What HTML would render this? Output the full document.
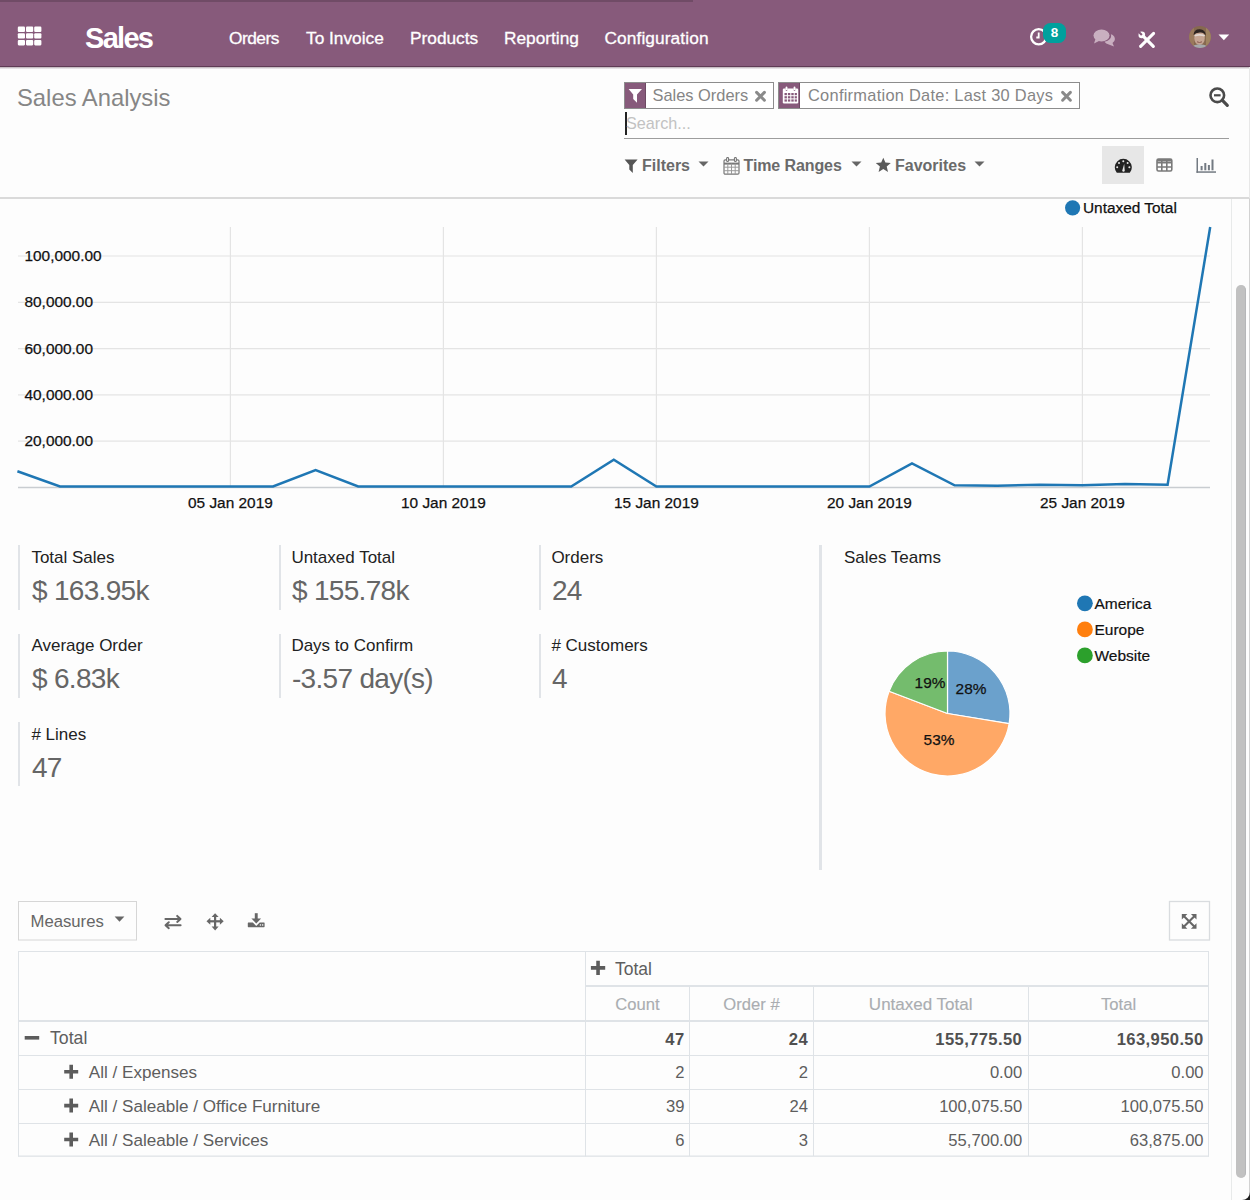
<!DOCTYPE html>
<html><head><meta charset="utf-8">
<style>
*{margin:0;padding:0;box-sizing:border-box}
html,body{width:1250px;height:1200px;overflow:hidden;background:#fdfdfd;font-family:"Liberation Sans",sans-serif}
.a{position:absolute;white-space:nowrap;line-height:1}
#nav{position:absolute;left:0;top:0;width:1250px;height:67px;background:#875a7b;border-bottom:1.2px solid #5f3b55}
#bar{position:absolute;left:0;top:0;width:693px;height:2px;background:#704b66}
.nv{color:#fff;font-size:17.3px;-webkit-text-stroke:0.3px #fff}
.cp-b{position:absolute;left:0;top:197px;width:1250px;height:2px;background:#dadada}
.fac{position:absolute;top:82px;height:27px;border:1px solid #8d8d8d;background:#fff}
.fic{position:absolute;left:0;top:0;height:25px;width:21px;background:#875a7b;border-right:1px solid #6d4a63}
.ft{color:#858585;font-size:16.4px}
.fl{color:#6a6a6a;font-size:16px;font-weight:bold}
.yl{color:#111;font-size:15.4px}
.kl{color:#222;font-size:17px;margin:0.6px 0 0 1.4px}
.kv{color:#666;font-size:28px;letter-spacing:-0.7px;margin:0.8px 0 0 2px}
.kb{position:absolute;width:2px;background:#e1e4e8}
td{font-size:15px}
.th{color:#aeb0b3;font-size:16.5px}
.td{color:#616161;font-size:16.5px}
.tb{color:#555;font-size:16.5px;font-weight:bold}
.tl{color:#616161;font-size:16.5px}
</style></head><body>
<div id="nav"><div id="bar"></div>
<!-- apps icon -->
<svg class="a" style="left:17px;top:26px" width="26" height="20" viewBox="0 0 26 20"><g fill="#fff"><rect x="0.8" y="0.6" width="7.2" height="5.4" rx="1.1"/><rect x="9" y="0.6" width="7.2" height="5.4" rx="1.1"/><rect x="17.2" y="0.6" width="7.2" height="5.4" rx="1.1"/><rect x="0.8" y="7.2" width="7.2" height="5.4" rx="1.1"/><rect x="9" y="7.2" width="7.2" height="5.4" rx="1.1"/><rect x="17.2" y="7.2" width="7.2" height="5.4" rx="1.1"/><rect x="0.8" y="14" width="7.2" height="5.4" rx="1.1"/><rect x="9" y="14" width="7.2" height="5.4" rx="1.1"/><rect x="17.2" y="14" width="7.2" height="5.4" rx="1.1"/></g></svg>
<div class="a" style="left:85px;top:24px;color:#fff;font-size:29px;font-weight:bold;letter-spacing:-1.7px">Sales</div>
<div class="a nv" style="left:229px;top:29.6px;letter-spacing:-0.5px">Orders</div>
<div class="a nv" style="left:306px;top:29.6px">To Invoice</div>
<div class="a nv" style="left:410px;top:29.6px">Products</div>
<div class="a nv" style="left:504px;top:29.6px">Reporting</div>
<div class="a nv" style="left:604.5px;top:29.6px;letter-spacing:0.1px">Configuration</div>
<!-- clock -->
<svg class="a" style="left:1028px;top:26px" width="22" height="22" viewBox="0 0 22 22">
<circle cx="10.7" cy="10.7" r="7.6" fill="none" stroke="#fff" stroke-width="2.3"/>
<path d="M10.7 6.5 V11.5 H8.3" fill="none" stroke="#fff" stroke-width="1.8"/>
</svg>
<div class="a" style="left:1043px;top:23.3px;width:23px;height:19.5px;border-radius:7.5px;background:#00a09d;color:#fff;font-size:13.5px;font-weight:bold;text-align:center;line-height:19.5px">8</div>
<!-- chat -->
<svg class="a" style="left:1092.5px;top:29px" width="22" height="19" viewBox="0 0 22 19">
<g fill="#c9afc0">
<ellipse cx="8.5" cy="6.5" rx="8" ry="6"/><path d="M2.5 10 L1 14.5 L7 11.5Z"/>
<path d="M11.5 12.8 A8 6 0 0 0 17.8 5.2 A5.8 5 0 0 1 19.5 14 L21 17.5 L15.8 15.4 A7 5 0 0 1 11.5 12.8Z"/>
</g></svg>
<!-- tools -->
<svg class="a" style="left:1137px;top:30px" width="20" height="19" viewBox="0 0 20 19">
<g stroke="#fff" stroke-linecap="round" fill="none">
<path d="M16.6 3.4 L3.6 16.4" stroke-width="3"/>
<path d="M6.2 6.2 L16.3 16.3" stroke-width="3.2"/>
</g>
<circle cx="4.8" cy="4.9" r="3.3" fill="#fff"/>
<rect x="-1.1" y="-4.5" width="2.2" height="4.6" transform="translate(4.8,4.9) rotate(-45)" fill="#875a7b"/>
</svg>
<!-- avatar -->
<svg class="a" style="left:1189px;top:25.8px" width="22" height="22" viewBox="0 0 22 22">
<defs><clipPath id="avc"><circle cx="11" cy="11" r="10.9"/></clipPath></defs>
<g clip-path="url(#avc)">
<rect width="22" height="22" fill="#86694f"/>
<rect x="0" y="0" width="5" height="22" fill="#9a7a5c"/><rect x="17" y="0" width="5" height="22" fill="#a08460"/>
<ellipse cx="10.5" cy="12" rx="5.3" ry="7" fill="#c5a592"/>
<path d="M4.5 9 Q5 3 10.8 3.2 Q16.5 3.4 16.8 9.5 Q15 6.2 10.8 6.6 Q6.5 6.8 4.5 9Z" fill="#2c2320"/>
<path d="M5.5 9.8 Q10.5 8 15.8 9.8" stroke="#e2d8d2" stroke-width="1.6" fill="none"/>
<path d="M8 15.8 Q10.5 17.2 13 15.8" stroke="#8a5a50" stroke-width="1" fill="none"/>
<path d="M3 22 Q4 18.2 10.8 18.6 Q17.5 18.2 18.5 22Z" fill="#a5a9ad"/>
</g></svg>
<svg class="a" style="left:1218px;top:34px" width="12" height="7" viewBox="0 0 12 7"><path d="M0.5 0.5 H11.2 L5.85 6.2Z" fill="#fff"/></svg>
</div>

<!-- control panel -->
<div class="a" style="left:0;top:67.2px;width:1250px;height:1.6px;background:linear-gradient(rgba(90,60,80,0.42),rgba(90,60,80,0.05))"></div>
<div class="a" style="left:1102px;top:146px;width:42px;height:38px;background:#e7e7e7"></div>

<div class="a" style="left:17px;top:86px;color:#868686;font-size:23.8px">Sales Analysis</div>

<div class="fac" style="left:624px;width:150px"><div class="fic"></div></div>
<div class="fac" style="left:778px;width:302px"><div class="fic"></div></div>
<div class="a ft" style="left:652.5px;top:87px">Sales Orders</div>
<svg class="a" style="left:628px;top:88px" width="15" height="16" viewBox="0 0 15 16"><path d="M0.6 1 H14 L9 6.5 V14.7 L5.2 11 V6.5 Z" fill="#fff"/></svg>
<svg class="a" style="left:754px;top:89.5px" width="13" height="13" viewBox="0 0 13 13"><path d="M2.6 2.4 L10.4 10.2 M10.4 2.4 L2.6 10.2" stroke="#8a8a8a" stroke-width="3" stroke-linecap="round"/></svg>
<svg class="a" style="left:782px;top:86px" width="17" height="18" viewBox="0 0 17 18"><g fill="#fff"><rect x="0.8" y="2.5" width="15.4" height="15" rx="1.2"/></g>
<g fill="#875a7b"><rect x="2.5" y="7" width="2.4" height="2.2"/><rect x="5.9" y="7" width="2.4" height="2.2"/><rect x="9.3" y="7" width="2.4" height="2.2"/><rect x="12.7" y="7" width="2.2" height="2.2"/>
<rect x="2.5" y="10.2" width="2.4" height="2.2"/><rect x="5.9" y="10.2" width="2.4" height="2.2"/><rect x="9.3" y="10.2" width="2.4" height="2.2"/><rect x="12.7" y="10.2" width="2.2" height="2.2"/>
<rect x="2.5" y="13.4" width="2.4" height="2.2"/><rect x="5.9" y="13.4" width="2.4" height="2.2"/><rect x="9.3" y="13.4" width="2.4" height="2.2"/><rect x="12.7" y="13.4" width="2.2" height="2.2"/>
<rect x="3.8" y="2.5" width="1.4" height="2.4"/><rect x="11.8" y="2.5" width="1.4" height="2.4"/></g>
<g fill="#fff"><rect x="3.6" y="0.6" width="1.8" height="3.6" rx="0.9"/><rect x="11.6" y="0.6" width="1.8" height="3.6" rx="0.9"/></g></svg>
<svg class="a" style="left:1059.5px;top:89.5px" width="13" height="13" viewBox="0 0 13 13"><path d="M2.6 2.4 L10.4 10.2 M10.4 2.4 L2.6 10.2" stroke="#8a8a8a" stroke-width="3" stroke-linecap="round"/></svg>
<svg class="a" style="left:1208px;top:86px" width="22" height="22" viewBox="0 0 22 22"><circle cx="9.3" cy="9.3" r="6.8" fill="none" stroke="#4a4a4a" stroke-width="2.6"/><path d="M14.2 14.2 L19.3 19.3" stroke="#4a4a4a" stroke-width="3.2" stroke-linecap="round"/><path d="M6 9.3 H12.6" stroke="#4a4a4a" stroke-width="2.2"/></svg>
<svg class="a" style="left:624px;top:158.5px" width="15" height="15" viewBox="0 0 15 15"><path d="M0.6 0.6 H13.6 L8.8 6 V14 L5.3 10.6 V6 Z" fill="#555"/></svg>
<svg class="a" style="left:697.5px;top:160.5px" width="11" height="6" viewBox="0 0 11 6"><path d="M0.5 0.5 H10.5 L5.5 5.6Z" fill="#666"/></svg>
<svg class="a" style="left:723px;top:156.5px" width="17" height="18" viewBox="0 0 17 18"><g fill="none" stroke="#777" stroke-width="1.2"><rect x="1" y="2.8" width="15" height="14.4" rx="1.2"/><path d="M1 6.6 H16" stroke-width="2"/><path d="M1 10.2 H16 M1 13.7 H16 M4.8 6.6 V17 M8.5 6.6 V17 M12.2 6.6 V17" stroke="#9a9a9a" stroke-width="1"/></g><g fill="#fdfdfd" stroke="#777" stroke-width="1.1"><rect x="3.6" y="0.5" width="2" height="4" rx="1"/><rect x="11.4" y="0.5" width="2" height="4" rx="1"/></g></svg>
<svg class="a" style="left:850.5px;top:160.5px" width="11" height="6" viewBox="0 0 11 6"><path d="M0.5 0.5 H10.5 L5.5 5.6Z" fill="#666"/></svg>
<svg class="a" style="left:875px;top:156.5px" width="17" height="16" viewBox="0 0 17 16"><path d="M8.3 0.8 L10.4 5.6 L15.8 6 L11.7 9.4 L13 14.9 L8.3 12 L3.6 14.9 L4.9 9.4 L0.8 6 L6.2 5.6Z" fill="#5a5a5a"/></svg>
<svg class="a" style="left:973.5px;top:160.5px" width="11" height="6" viewBox="0 0 11 6"><path d="M0.5 0.5 H10.5 L5.5 5.6Z" fill="#666"/></svg>
<!-- view switcher -->
<svg class="a" style="left:1114px;top:158px" width="19" height="16" viewBox="0 0 19 16"><path d="M2.8 14.8 A8.5 8.5 0 1 1 15.8 14.8 Z" fill="#222"/>
<g fill="#e7e7e7"><circle cx="9.3" cy="3.2" r="1"/><circle cx="5" cy="5" r="1"/><circle cx="13.6" cy="5" r="1"/><circle cx="3.2" cy="9.3" r="1"/><circle cx="15.4" cy="9.3" r="1"/><path d="M8.3 12.6 L10.2 5.8 L10.7 12.6 A1.2 1.2 0 1 1 8.3 12.6Z"/></g></svg>
<svg class="a" style="left:1156px;top:158px" width="17" height="14" viewBox="0 0 17 14"><g fill="none" stroke="#7a7a7a" stroke-width="1.6"><rect x="1" y="1" width="14.8" height="12" rx="1.5"/><path d="M1 4.8 H15.8 M1 9 H15.8 M5.8 1 V13 M10.8 1 V13"/></g><rect x="1" y="1" width="14.8" height="2.6" fill="#7a7a7a"/></svg>
<svg class="a" style="left:1196px;top:158px" width="21" height="15" viewBox="0 0 21 15"><g fill="#737a82"><rect x="0.5" y="0" width="1.5" height="14.8"/><rect x="0.5" y="13.3" width="19.5" height="1.5"/><rect x="4.6" y="8" width="2" height="4.3"/><rect x="8.3" y="5" width="2" height="7.3"/><rect x="11.9" y="7" width="2" height="5.3"/><rect x="15.5" y="1.5" width="2" height="10.8"/></g></svg>
<div class="a ft" style="left:808px;top:87px;letter-spacing:0.27px">Confirmation Date: Last 30 Days</div>

<div class="a" style="left:625px;top:111.5px;width:1.6px;height:23px;background:#222"></div>
<div class="a" style="left:626px;top:114.5px;color:#c2c2c2;font-size:16.2px">Search...</div>
<div class="a" style="left:624px;top:138px;width:605px;height:1px;background:#9d9d9d"></div>

<div class="a fl" style="left:642px;top:158px">Filters</div>
<div class="a fl" style="left:743.5px;top:158px;letter-spacing:-0.1px">Time Ranges</div>
<div class="a fl" style="left:895px;top:158px">Favorites</div>


<div class="cp-b"></div>
<!-- chart -->
<svg class="a" style="left:0;top:0" width="1232" height="530" viewBox="0 0 1232 530">
<path d="M18 256 H1210" stroke="#e4e4e4" stroke-width="1.2"/><path d="M18 302.3 H1210" stroke="#e4e4e4" stroke-width="1.2"/><path d="M18 348.6 H1210" stroke="#e4e4e4" stroke-width="1.2"/><path d="M18 394.9 H1210" stroke="#e4e4e4" stroke-width="1.2"/><path d="M18 441.2 H1210" stroke="#e4e4e4" stroke-width="1.2"/><path d="M230.4 227 V487" stroke="#e4e4e4" stroke-width="1.2"/><path d="M443.4 227 V487" stroke="#e4e4e4" stroke-width="1.2"/><path d="M656.4 227 V487" stroke="#e4e4e4" stroke-width="1.2"/><path d="M869.4 227 V487" stroke="#e4e4e4" stroke-width="1.2"/><path d="M1082.4 227 V487" stroke="#e4e4e4" stroke-width="1.2"/>
<path d="M18 487.5 H1210" stroke="#c9cdd1" stroke-width="1.3"/>
<g font-family="Liberation Sans" font-size="15.4" fill="#111" stroke="#111" stroke-width="0.25"><text x="24.5" y="261.1">100,000.00</text><text x="24.5" y="307.4">80,000.00</text><text x="24.5" y="353.7">60,000.00</text><text x="24.5" y="400.0">40,000.00</text><text x="24.5" y="446.3">20,000.00</text><text x="230.4" y="507.6" text-anchor="middle">05 Jan 2019</text><text x="443.4" y="507.6" text-anchor="middle">10 Jan 2019</text><text x="656.4" y="507.6" text-anchor="middle">15 Jan 2019</text><text x="869.4" y="507.6" text-anchor="middle">20 Jan 2019</text><text x="1082.4" y="507.6" text-anchor="middle">25 Jan 2019</text>
<text x="1083" y="212.6">Untaxed Total</text></g>
<circle cx="1072.6" cy="207.8" r="7.6" fill="#1f77b4"/>
<polyline points="17.4,471.3 60.0,486.5 102.6,486.5 145.2,486.5 187.8,486.5 230.4,486.5 273.0,486.5 315.6,470.2 358.2,486.5 400.8,486.5 443.4,486.5 486.0,486.5 528.6,486.5 571.2,486.5 613.8,459.8 656.4,486.5 699.0,486.5 741.6,486.5 784.2,486.5 826.8,486.5 869.4,486.5 912.0,463.4 954.6,485.3 997.2,485.7 1039.8,484.8 1082.4,485.2 1125.0,483.9 1167.6,484.8 1210.2,227.0" fill="none" stroke="#1f77b4" stroke-width="2.5" stroke-linejoin="miter"/>
</svg>


<!-- kpi -->
<div class="kb" style="left:18px;top:545.3px;height:64.3px"></div>
<div class="a kl" style="left:30px;top:548.4px">Total Sales</div>
<div class="a kv" style="left:30px;top:576.1px">$ 163.95k</div>
<div class="kb" style="left:278.5px;top:545.3px;height:64.3px"></div>
<div class="a kl" style="left:290px;top:548.4px">Untaxed Total</div>
<div class="a kv" style="left:290px;top:576.1px">$ 155.78k</div>
<div class="kb" style="left:539px;top:545.3px;height:64.3px"></div>
<div class="a kl" style="left:550px;top:548.4px">Orders</div>
<div class="a kv" style="left:550px;top:576.1px">24</div>
<div class="kb" style="left:18px;top:633.7px;height:64.3px"></div>
<div class="a kl" style="left:30px;top:636.8px">Average Order</div>
<div class="a kv" style="left:30px;top:664.5px">$ 6.83k</div>
<div class="kb" style="left:278.5px;top:633.7px;height:64.3px"></div>
<div class="a kl" style="left:290px;top:636.8px">Days to Confirm</div>
<div class="a kv" style="left:290px;top:664.5px">-3.57 day(s)</div>
<div class="kb" style="left:539px;top:633.7px;height:64.3px"></div>
<div class="a kl" style="left:550px;top:636.8px"># Customers</div>
<div class="a kv" style="left:550px;top:664.5px">4</div>
<div class="kb" style="left:18px;top:722.1px;height:64.3px"></div>
<div class="a kl" style="left:30px;top:725.2px"># Lines</div>
<div class="a kv" style="left:30px;top:752.9px">47</div>
<div class="kb" style="left:819px;top:545px;width:3px;height:325px"></div>
<div class="a kl" style="left:842.5px;top:548.4px">Sales Teams</div>
<svg class="a" style="left:0;top:0" width="1232" height="1200" viewBox="0 0 1232 1200"><path d="M947.5 713.5 L947.50 651.00 A62.5 62.5 0 0 1 1009.17 723.66 Z" fill="#6ba1cc" stroke="#fff" stroke-width="1.2"/><path d="M947.5 713.5 L1009.17 723.66 A62.5 62.5 0 1 1 889.10 691.22 Z" fill="#ffa866" stroke="#fff" stroke-width="1.2"/><path d="M947.5 713.5 L889.10 691.22 A62.5 62.5 0 0 1 947.50 651.00 Z" fill="#74bc6d" stroke="#fff" stroke-width="1.2"/>
<g font-family="Liberation Sans" font-size="15.4" fill="#111" stroke="#111" stroke-width="0.25" text-anchor="middle">
<text x="930" y="687.5">19%</text><text x="971" y="694">28%</text><text x="939" y="744.5">53%</text></g>
<g font-family="Liberation Sans" font-size="15.5" fill="#111" stroke="#111" stroke-width="0.2">
<circle cx="1084.9" cy="603.3" r="7.9" fill="#1f77b4" stroke="none"/><text x="1094.5" y="608.7">America</text>
<circle cx="1084.9" cy="629.4" r="7.9" fill="#ff7f0e" stroke="none"/><text x="1094.5" y="634.8">Europe</text>
<circle cx="1084.9" cy="655.4" r="7.9" fill="#2ca02c" stroke="none"/><text x="1094.5" y="660.8">Website</text>
</g></svg>
<!-- pivot -->
<svg class="a" style="left:0;top:0" width="1232" height="1200" viewBox="0 0 1232 1200">
<style>.mb{font-size:16.7px;fill:#666} .td{font-size:16.6px;fill:#5e5e5e} .tb{font-size:16.6px;fill:#505050;font-weight:bold;letter-spacing:0.38px} .tl{font-size:17.1px;fill:#5e5e5e} .th{font-size:16.6px;fill:#aaadb1;stroke:#aaadb1;stroke-width:0.15px}</style>
<rect x="18.5" y="901.5" width="118" height="38.5" fill="#fdfdfd" stroke="#d6d6d6" stroke-width="1"/><rect x="1169.5" y="901.5" width="40" height="38.5" fill="#fdfdfd" stroke="#d9dcdf" stroke-width="1.3"/><rect x="18" y="951" width="1191" height="1" fill="#dfe3e7"/><rect x="18" y="1155.5" width="1191" height="1.3" fill="#dfe3e7"/><rect x="18" y="951" width="1" height="205.5" fill="#dfe3e7"/><rect x="1208" y="951" width="1" height="205.5" fill="#dfe3e7"/><rect x="585" y="951" width="1" height="205.5" fill="#dfe3e7"/><rect x="585" y="985" width="624" height="2" fill="#dfe3e7"/><rect x="18" y="1020" width="1191" height="2" fill="#dfe3e7"/><rect x="18" y="1055" width="1191" height="1" fill="#dfe3e7"/><rect x="18" y="1089" width="1191" height="1" fill="#dfe3e7"/><rect x="18" y="1123" width="1191" height="1" fill="#dfe3e7"/><rect x="689" y="987" width="1" height="169" fill="#dfe3e7"/><rect x="813" y="987" width="1" height="169" fill="#dfe3e7"/><rect x="1028" y="987" width="1" height="169" fill="#dfe3e7"/>
<g font-family="Liberation Sans"><text x="30.5" y="927.4" text-anchor="start" class="mb">Measures</text><text x="615" y="974.6" text-anchor="start" class="tl" style="font-size:17.5px">Total</text><text x="637.5" y="1009.7" text-anchor="middle" class="th">Count</text><text x="751.5" y="1009.7" text-anchor="middle" class="th">Order #</text><text x="920.7" y="1009.7" text-anchor="middle" class="th" style="font-size:17px">Untaxed Total</text><text x="1118.6" y="1009.7" text-anchor="middle" class="th">Total</text><text x="50" y="1044.3" text-anchor="start" class="tl" style="font-size:17.7px">Total</text><text x="684.5" y="1044.5" text-anchor="end" class="tb">47</text><text x="808" y="1044.5" text-anchor="end" class="tb">24</text><text x="1022.2" y="1044.5" text-anchor="end" class="tb">155,775.50</text><text x="1203.6" y="1044.5" text-anchor="end" class="tb">163,950.50</text><text x="88.8" y="1078.2" text-anchor="start" class="tl">All / Expenses</text><text x="684.5" y="1078.2" text-anchor="end" class="td">2</text><text x="808" y="1078.2" text-anchor="end" class="td">2</text><text x="1022.2" y="1078.2" text-anchor="end" class="td">0.00</text><text x="1203.6" y="1078.2" text-anchor="end" class="td">0.00</text><text x="88.8" y="1112.1" text-anchor="start" class="tl">All / Saleable / Office Furniture</text><text x="684.5" y="1112.1" text-anchor="end" class="td">39</text><text x="808" y="1112.1" text-anchor="end" class="td">24</text><text x="1022.2" y="1112.1" text-anchor="end" class="td">100,075.50</text><text x="1203.6" y="1112.1" text-anchor="end" class="td">100,075.50</text><text x="88.8" y="1146" text-anchor="start" class="tl">All / Saleable / Services</text><text x="684.5" y="1146" text-anchor="end" class="td">6</text><text x="808" y="1146" text-anchor="end" class="td">3</text><text x="1022.2" y="1146" text-anchor="end" class="td">55,700.00</text><text x="1203.6" y="1146" text-anchor="end" class="td">63,875.00</text></g>
<rect x="24.7" y="1036" width="14.5" height="3.6" fill="#5c5c5c"/><path d="M590.9 966.0500000000001 h14.3 v3.6 h-14.3Z M596.25 960.7 h3.6 v14.3 h-3.6Z" fill="#5c5c5c"/><path d="M64.2 1069.9 h14 v3.6 h-14Z M69.4 1064.7 h3.6 v14 h-3.6Z" fill="#5c5c5c"/><path d="M64.2 1103.8 h14 v3.6 h-14Z M69.4 1098.6 h3.6 v14 h-3.6Z" fill="#5c5c5c"/><path d="M64.2 1137.7 h14 v3.6 h-14Z M69.4 1132.5 h3.6 v14 h-3.6Z" fill="#5c5c5c"/><path d="M114.6 916.4 H124.4 L119.5 921.8Z" fill="#666"/><g stroke="#676767" fill="none" stroke-width="2" stroke-linecap="round" stroke-linejoin="round"><path d="M165.4 918.9 H180.4 M177.2 915.9 L180.5 918.9 L177.2 921.9"/><path d="M180.6 925.2 H165.6 M168.8 922.2 L165.5 925.2 L168.8 928.2"/></g>
<g fill="#676767"><rect x="214" y="915.5" width="2.2" height="12.5"/><rect x="209" y="920.2" width="12.3" height="2.2"/><path d="M215.1 913.2 L218.6 917 H211.6Z"/><path d="M215.1 930.4 L218.6 926.6 H211.6Z"/><path d="M206.5 921.3 L210.3 917.8 V924.8Z"/><path d="M223.7 921.3 L219.9 917.8 V924.8Z"/></g>
<g fill="#676767"><rect x="254.8" y="913.2" width="2.9" height="5.8"/><path d="M251.4 918.4 H261.1 L256.25 923.6Z"/><path d="M248.2 922.6 H252.8 L256.25 926 L259.7 922.6 H264.2 Q264.6 922.6 264.6 923 V926.6 Q264.6 927.2 264 927.2 H248.4 Q247.8 927.2 247.8 926.6 V923 Q247.8 922.6 248.2 922.6Z"/></g><g fill="#fdfdfd"><rect x="259.8" y="924.3" width="1.3" height="1.3"/><rect x="262" y="924.3" width="1.3" height="1.3"/></g>
<g stroke="#676767" stroke-width="2.1"><path d="M1184 916.2 L1194.3 926.6 M1194.3 916.2 L1184 926.6"/></g><g fill="#676767"><path d="M1181.8 914 H1187.4 L1181.8 919.6Z"/><path d="M1196.5 914 H1190.9 L1196.5 919.6Z"/><path d="M1181.8 928.8 H1187.4 L1181.8 923.2Z"/><path d="M1196.5 928.8 H1190.9 L1196.5 923.2Z"/></g>
</svg>
<!-- scrollbar -->
<div class="a" style="left:1231px;top:199px;width:1.2px;height:1001px;background:#e8eaea"></div>
<div class="a" style="left:1236px;top:284.7px;width:10px;height:893.5px;border-radius:5px;background:#c1c1c1;border-right:1px solid #b5b6b8"></div>
<div class="a" style="left:1249px;top:67px;width:1px;height:131px;background:#e8e8e8"></div>
<div class="a" style="left:1249px;top:199px;width:1px;height:1001px;background:#d2d2d2"></div>
<svg class="a" style="left:1242px;top:1192px" width="8" height="8" viewBox="0 0 8 8"><path d="M8 0 V8 H0 A8 8 0 0 0 8 0Z" fill="#1e1e1e"/></svg>
</body></html>
